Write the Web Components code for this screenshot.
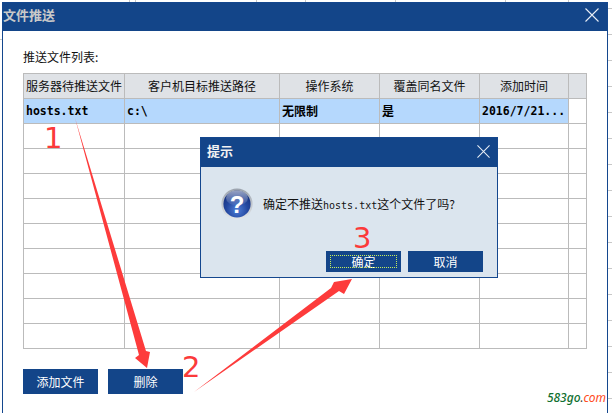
<!DOCTYPE html>
<html lang="zh">
<head>
<meta charset="utf-8">
<title>文件推送</title>
<style>
html,body{margin:0;padding:0;background:#fff}
body{font:12px/16px "Noto Sans CJK SC","Liberation Sans",sans-serif;color:#111;width:612px;height:413px;overflow:hidden}
</style>
</head>
<body>
<app-desktop>
  <file-window heading="文件推送">
    <span slot="label">推送文件列表:</span>
    <file-grid slot="grid"></file-grid>
    <ui-button slot="actions" w="75" h="25">添加文件</ui-button>
    <ui-button slot="actions" w="75" h="25">删除</ui-button>
    <site-mark slot="mark"></site-mark>
  </file-window>
  <confirm-dialog slot="over" heading="提示">
    确定不推送<span style="font-family:'DejaVu Sans Mono',monospace;font-size:10px">hosts.txt</span>这个文件了吗?
    <ui-button slot="actions" w="75" h="21" focused>确定</ui-button>
    <ui-button slot="actions" w="75" h="21">取消</ui-button>
  </confirm-dialog>
  <red-notes slot="over"></red-notes>
</app-desktop>
<script>
function shell(el,html){el.attachShadow({mode:'open'}).innerHTML=html}
customElements.define('app-desktop',class extends HTMLElement{
  constructor(){super();shell(this,`<style>
  :host{display:block;position:relative;width:612px;height:413px;box-sizing:border-box;padding:2px 4px 0 2px;overflow:hidden;
    background:
     repeating-linear-gradient(180deg,#c8c8c8 0 1px,transparent 1px 26px) 608px 8px/4px 100% no-repeat,
     linear-gradient(#c8c8c8,#c8c8c8) 0 39px/2px 1px no-repeat,
     linear-gradient(#c8c8c8,#c8c8c8) 129px 0/1px 2px no-repeat,
     linear-gradient(#c8c8c8,#c8c8c8) 135px 0/1px 2px no-repeat,
     linear-gradient(#c8c8c8,#c8c8c8) 256px 0/1px 2px no-repeat,
     linear-gradient(#c8c8c8,#c8c8c8) 305px 0/1px 2px no-repeat,
     linear-gradient(#c8c8c8,#c8c8c8) 395px 0/1px 2px no-repeat,
     linear-gradient(#c8c8c8,#c8c8c8) 505px 0/1px 2px no-repeat,
     linear-gradient(#c8c8c8,#c8c8c8) 568px 0/1px 2px no-repeat,#fff}
  </style><slot></slot><slot name="over"></slot>`)}
});
customElements.define('close-icon',class extends HTMLElement{
  constructor(){super();const s=this.getAttribute('size')||14;shell(this,`<style>:host{display:block;width:${s}px;height:${s}px}svg{display:block}</style>
  <svg width="${s}" height="${s}" viewBox="0 0 14 14"><path d="M.5.5l13 13M13.5.5l-13 13" stroke="#e8eef6" stroke-width="1.1" fill="none"/></svg>`)}
});
customElements.define('file-window',class extends HTMLElement{
  constructor(){super();shell(this,`<style>
  :host{display:flex;flex-direction:column;box-sizing:border-box;width:606px;height:411px;border:solid #14478e;border-width:1px 1px 0;background:#fff;position:relative}
  header{height:28px;box-sizing:border-box;background:#134589;display:flex;align-items:center;justify-content:space-between;padding:0 8px 4px 0;flex:none}
  h1{margin:0;font:bold 13px/16px "Noto Sans CJK SC",sans-serif;color:#c9c9c9}
  main{flex:1;padding:18px 20px 0;display:flex;flex-direction:column}
  .label{height:16px;margin-bottom:8px;color:#111}
  .actions{display:flex;gap:10px;margin-top:20px}
  .mark{display:flex;justify-content:flex-end;margin:-4px -19px 0 0}
  </style>
  <header><h1>${this.getAttribute('heading')}</h1><close-icon></close-icon></header>
  <main><div class="label"><slot name="label"></slot></div><slot name="grid"></slot>
  <div class="actions"><slot name="actions"></slot></div>
  <div class="mark"><slot name="mark"></slot></div></main>`)}
});
customElements.define('file-grid',class extends HTMLElement{
  constructor(){super();
    const heads=['服务器待推送文件','客户机目标推送路径','操作系统','覆盖同名文件','添加时间',''];
    const widths=[101,155,100,100,89,18];
    const row=['hosts.txt','c:\\','无限制','是','2016/7/21...'];
    const mono=[1,1,0,0,1];
    let blank='';
    for(let i=0;i<9;i++) blank+='<tr>'+widths.map(()=>'<td></td>').join('')+'</tr>';
    shell(this,`<style>
    :host{display:block;width:564px}
    table{table-layout:fixed;width:564px;border-collapse:separate;border-spacing:0;border-top:1px solid #bbb;border-left:1px solid #bbb}
    th,td{box-sizing:border-box;height:25px;padding:0 0 0 2px;border-right:1px solid #bbb;border-bottom:1px solid #bbb;white-space:nowrap;overflow:hidden;text-align:left}
    th{background:#dfe2e6;font:400 12px/16px "Noto Sans CJK SC",sans-serif;color:#111;text-align:center;padding:0}
    tr.sel td{background:#b5d8fd;font:bold 12px/16px "Noto Sans CJK SC",sans-serif;color:#000}
    tr.sel td.m{font:bold 11.5px/16px "DejaVu Sans Mono",monospace}
    tr.sel td:last-child{background:#fff}
    </style>
    <table><colgroup>${widths.map(w=>`<col style="width:${w}px">`).join('')}</colgroup>
    <thead><tr>${heads.map(h=>`<th>${h}</th>`).join('')}</tr></thead>
    <tbody><tr class="sel">${row.map((c,i)=>`<td class="${mono[i]?'m':''}">${c}</td>`).join('')}<td></td></tr>${blank}</tbody></table>`)}
});
customElements.define('ui-button',class extends HTMLElement{
  constructor(){super();const w=this.getAttribute('w'),h=this.getAttribute('h');
    const f=this.hasAttribute('focused');
    shell(this,`<style>
    :host{display:flex;align-items:center;justify-content:center;box-sizing:border-box;width:${w}px;height:${h}px;background:#134589;color:#fff;font:12px/16px "Noto Sans CJK SC",sans-serif;flex:none;position:relative}
    i{position:absolute;left:4px;right:4px;top:4px;bottom:4px;border:1px dotted #c4ee5c}
    </style>${f?'<i></i>':''}<slot></slot>`)}
});
customElements.define('help-icon',class extends HTMLElement{
  constructor(){super();shell(this,`<style>:host{display:block;width:32px;height:32px;flex:none}svg{display:block}</style>
  <svg width="32" height="32" viewBox="0 0 32 32">
   <defs>
    <radialGradient id="b" cx=".5" cy=".72" r=".72"><stop offset="0" stop-color="#4f7fd8"/><stop offset=".55" stop-color="#23479f"/><stop offset="1" stop-color="#162f78"/></radialGradient>
    <linearGradient id="r" x1="0" y1="0" x2="0" y2="1"><stop offset="0" stop-color="#9aa2ad"/><stop offset="1" stop-color="#e4e7ea"/></linearGradient>
    <linearGradient id="g" x1="0" y1="0" x2="0" y2="1"><stop offset="0" stop-color="#fff" stop-opacity=".55"/><stop offset="1" stop-color="#fff" stop-opacity=".04"/></linearGradient>
   </defs>
   <circle cx="16" cy="16" r="15.6" fill="url(#r)"/>
   <circle cx="16" cy="16" r="13.6" fill="url(#b)"/>
   <ellipse cx="16" cy="10" rx="11" ry="7.5" fill="url(#g)"/>
   <text x="16" y="24.5" text-anchor="middle" font-family="Liberation Sans,sans-serif" font-weight="700" font-size="24" fill="#fff">?</text>
  </svg>`)}
});
customElements.define('confirm-dialog',class extends HTMLElement{
  constructor(){super();shell(this,`<style>
  :host{display:flex;flex-direction:column;position:absolute;left:200px;top:137px;width:298px;height:141px;box-sizing:border-box;border:1px solid #14478e;background:#dbe5ee}
  header{height:29px;box-sizing:border-box;flex:none;background:#134589;display:flex;align-items:center;justify-content:space-between;padding:0 7px 3px 6px}
  h2{margin:0;font:bold 13px/16px "Noto Sans CJK SC",sans-serif;color:#f2f2f2}
  .msg{display:flex;align-items:center;gap:10px;padding:21px 0 0 20px;color:#111}
  .msg div{padding-top:2px}
  .actions{margin-top:auto;display:flex;justify-content:flex-end;gap:7px;padding:0 14px 5px 0}
  </style>
  <header><h2>${this.getAttribute('heading')}</h2><close-icon size="13"></close-icon></header>
  <div class="msg"><help-icon></help-icon><div><slot></slot></div></div>
  <div class="actions"><slot name="actions"></slot></div>`)}
});
customElements.define('site-mark',class extends HTMLElement{
  constructor(){super();shell(this,`<style>
  :host{display:block;font:italic 12px/16px "Noto Sans",sans-serif;letter-spacing:-.05px}
  b{font-weight:500;color:#10702f}s{text-decoration:none;color:#444}u{text-decoration:none;color:#ff4a22}
  </style><b>583go</b><s>.</s><u>com</u>`)}
});
customElements.define('red-notes',class extends HTMLElement{
  constructor(){super();shell(this,`<style>
  :host{display:block;position:absolute;left:0;top:0;width:612px;height:413px;pointer-events:none}
  svg{position:absolute;left:0;top:0}
  span{position:absolute;font:400 29px/22px "DejaVu Sans",sans-serif;color:#fb3a3a}
  </style>
  <svg width="612" height="413" viewBox="0 0 612 413">
   <path d="M75 118 L146 351 L150 352 L147 368 L135 358 L139 355 Z" fill="#fd3b3b"/>
   <path d="M194 392 L331 288 L334 282 L352 279 L344 294 L339 291 Z" fill="#fd3b3b"/>
  </svg>
  <span style="left:44px;top:127px">1</span>
  <span style="left:182px;top:356px">2</span>
  <span style="left:353px;top:227px">3</span>`)}
});
</script>
</body>
</html>
